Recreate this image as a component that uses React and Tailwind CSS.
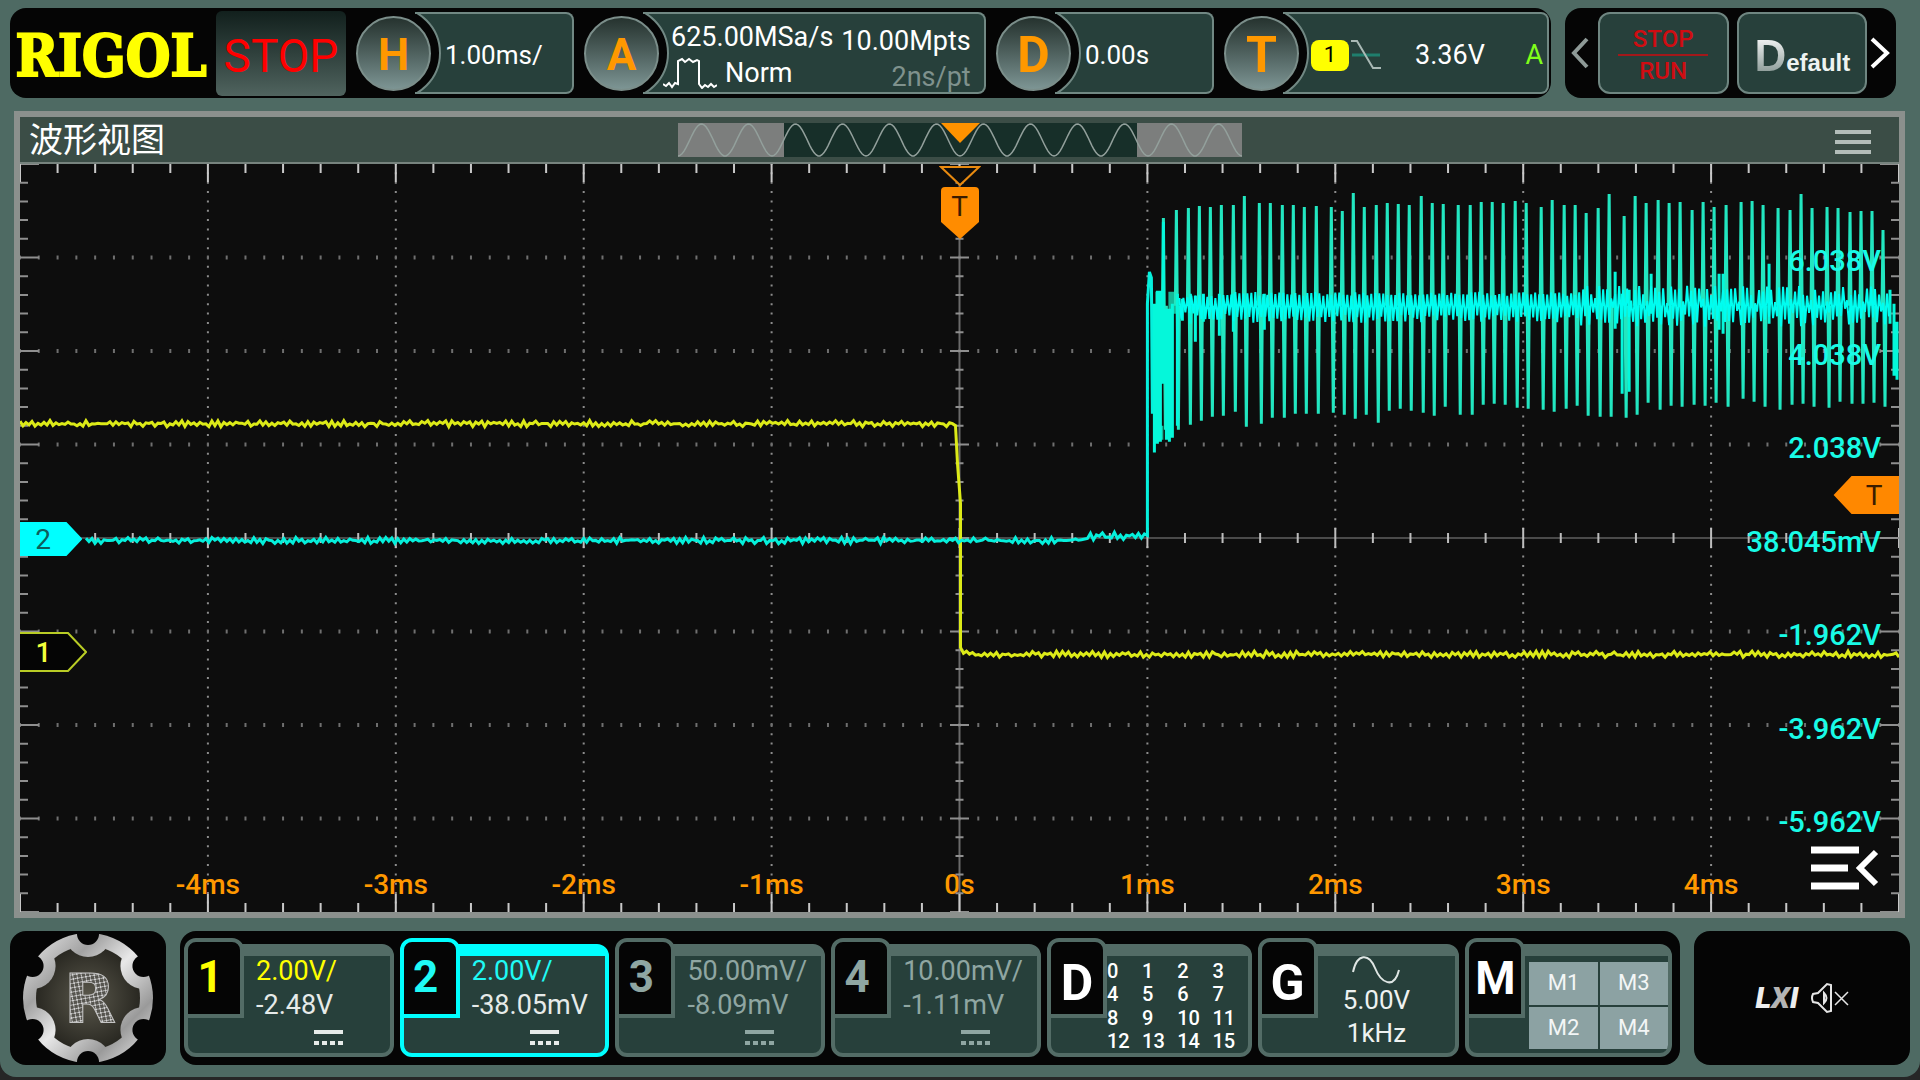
import React from 'react';

/* ---------- waveform data (plot space: 1880 x 749) ---------- */

const PLOT_W = 1880;
const PLOT_H = 749;
const DIV_X = 188;
const DIV_Y = PLOT_H / 8;

const noise = (i, seed) => {
  const s = Math.sin(i * 12.9898 + seed * 78.233) * 43758.5453;
  return (s - Math.floor(s)) * 2 - 1;
};

const noisy = (x0, x1, y, seed, amp = 3) => {
  const pts = [];
  for (let x = x0, i = 0; x <= x1; x += 3, i += 1) {
    pts.push(`${x},${(y + (i % 2 ? 1 : -1) * amp * 0.45 + noise(i, seed) * amp * 0.6).toFixed(1)}`);
  }
  return pts.join(' ');
};

const CH1_TRACE = `${noisy(0, 935, 260, 1)} 936,262 938,300 941,340 941,484 944,490 ${noisy(947, 1880, 491, 2)}`;
const CH2_TRACE = `${noisy(66, 1062, 377, 3)} 1068,375 ${noisy(1071, 1127, 373, 4, 4)} 1128,372 1128,140 1130,108 1132,114 1133,250`;

/* [x, top, bottom] of every pulse */
const PULSES = [
  [1144, 54, 266], [1157, 46, 266], [1169, 44, 261], [1180, 42, 257], [1191, 43, 253], [1202, 41, 252],
  [1214, 41, 248], [1225, 32, 263], [1240, 39, 260], [1251, 39, 254], [1263, 41, 254], [1274, 41, 250],
  [1285, 43, 250], [1297, 42, 250], [1312, 43, 249], [1323, 47, 251], [1334, 29, 255], [1345, 43, 251],
  [1357, 41, 259], [1368, 39, 247], [1379, 40, 245], [1390, 41, 247], [1402, 32, 249], [1413, 39, 252],
  [1424, 40, 243], [1439, 41, 251], [1451, 41, 251], [1462, 38, 241], [1473, 38, 240], [1484, 39, 241],
  [1496, 37, 244], [1507, 39, 245], [1522, 43, 246], [1533, 36, 248], [1545, 41, 245], [1556, 41, 242],
  [1567, 49, 252], [1579, 44, 253], [1590, 30, 253], [1605, 52, 254], [1616, 32, 251], [1627, 39, 239],
  [1639, 36, 246], [1650, 39, 242], [1661, 38, 243], [1673, 46, 241], [1684, 38, 242], [1695, 43, 239],
  [1707, 41, 243], [1722, 38, 235], [1733, 37, 238], [1744, 41, 243], [1759, 44, 246], [1771, 46, 241],
  [1782, 30, 240], [1793, 44, 243], [1808, 43, 244], [1819, 44, 238], [1831, 48, 240], [1842, 47, 240],
  [1853, 47, 239], [1864, 66, 243],
];
const PULSE_PATH = PULSES.map(([x, t, b]) => `M${x - 1} 142L${x} ${t}L${x + 2} ${b}L${x + 3} 142`).join('');

const bandPoints = () => {
  const pts = [];
  for (let x = 1160, i = 0; x < 1872; x += 2, i += 1) {
    const late = x > 1560;
    const open = late ? (i % 9 < 2 ? 0.45 : 1) : x < 1210 ? 0.8 : 1;
    const up = (late ? 15 : 12) * open + noise(i, 5) * (late ? 5 : 2);
    const down = (late ? 16 : 13) * open + noise(i, 6) * (late ? 6 : 4);
    pts.push(`${x},${(i % 2 ? 142 + down : 142 - up).toFixed(1)}`);
  }
  return pts.join(' ');
};
const BAND = bandPoints();
const BURST =
  'M1135 140V289M1138 127V280M1141 127V278M1147 145V276M1150 145V278M1153 140V274M1144 58V220M1158 130V262' +
  'M1163 135V157M1171 130V160M1176 132V178M1184 130V158M1200 130V172M1214 130V168M1245 130V166' +
  'M1603 130V230M1610 126V228M1596 108V165M1632 110V150M1700 110V166M1704 110V170M1750 100V160M1871 126V160M1875 140V212M1878 158V216';
const BURST_DIM = 'M1138 128V150M1151 128V150M1155 128V150M1142 262V276';

/* ---------- graticule ---------- */

const range = (n) => Array.from({ length: n }, (_, i) => i);

const TOP_TICKS = range(51).map((i) => {
  const x = (i * DIV_X) / 5;
  const l = i % 5 === 0 ? 18 : 9;
  return `M${x} 0v${l}M${x} ${PLOT_H}v${-l}`;
}).join('');
const MID_X_TICKS = range(51).map((i) => {
  const l = i % 5 === 0 ? 10 : 5;
  return `M${(i * DIV_X) / 5} ${PLOT_H / 2 - l}v${2 * l}`;
}).join('');
const SIDE_TICKS = range(41).map((i) => {
  const y = (i * DIV_Y) / 5;
  const l = i % 5 === 0 ? 19 : 8;
  return `M0 ${y}h${l}M${PLOT_W} ${y}h${-l}M${PLOT_W / 2 - l / 2} ${y}h${l}`;
}).join('');
const V_LINES = range(9).filter((i) => i !== 4).map((i) => `M${(i + 1) * DIV_X} 0V${PLOT_H}`).join('');
const H_LINES = range(7).filter((i) => i !== 3).map((i) => `M0 ${(i + 1) * DIV_Y}H${PLOT_W}`).join('');

function Graph() {
  return (
    <svg
      className="absolute inset-0 h-full w-full"
      viewBox={`0 0 ${PLOT_W} ${PLOT_H}`}
      preserveAspectRatio="none"
      aria-hidden="true"
      fill="none"
    >
      <path d={V_LINES} stroke="#8c8c8c" strokeWidth="2" strokeDasharray="2 7.36" strokeDashoffset="1" />
      <path d={H_LINES} stroke="#6f6f6f" strokeWidth="4" strokeDasharray="2 16.8" strokeDashoffset="1" />
      <path d={`M0 ${PLOT_H / 2}H${PLOT_W}`} stroke="#4a4a4a" strokeWidth="2" />
      <path d={`M${PLOT_W / 2} 0V${PLOT_H}`} stroke="#6a6a6a" strokeWidth="2" />
      <path d={MID_X_TICKS} stroke="#bdbdbd" strokeWidth="2" />
      <path d={SIDE_TICKS} stroke="#8f8f8f" strokeWidth="2" />
      <path d={TOP_TICKS} stroke="#c8c8c8" strokeWidth="2" />
      <polyline points={CH1_TRACE} stroke="#dcea18" strokeWidth="3" />
      <polyline points={CH2_TRACE} stroke="#05f0dc" strokeWidth="3" />
      <path d={BURST_DIM} stroke="#15b898" strokeWidth="4" />
      <path d={PULSE_PATH} stroke="#22e6c0" strokeWidth="3" />
      <path d={BURST} stroke="#05f7da" strokeWidth="3" />
      <polyline points={BAND} stroke="#00fdf0" strokeWidth="2" />
    </svg>
  );
}

/* ---------- header pieces ---------- */

function Knob({ letter, big, grow, children }) {
  return (
    <div className={`flex h-full min-w-0 items-center ${grow}`}>
      <button
        className={`relative z-10 flex size-[75px] shrink-0 items-center justify-center rounded-full border-2 border-[#7b8e8a] bg-linear-to-b from-[#26332f] to-[#7d9594] pt-1 font-bold text-[#ff9800] ${
          big ? 'text-[50px]' : 'text-[44px]'
        } leading-none`}
      >
        {letter}
      </button>
      <div className="relative -ml-4 flex h-[82px] min-w-0 flex-1 items-center overflow-hidden rounded-r-lg border-2 border-l-0 border-[#718883] bg-[#27403b] pt-1 pl-[30px]">
        <span className="absolute top-1/2 -left-[68px] size-[94px] -translate-y-1/2 rounded-full border-2 border-[#718883] bg-[#050505]" />
        {children}
      </div>
    </div>
  );
}

function TopBar() {
  return (
    <header className="flex h-[90px] gap-3.5 pr-3.5">
      <div className="flex min-w-0 flex-1 items-center gap-2.5 rounded-2xl bg-[#050505] pr-0.5 pl-1.5">
        <div className="flex w-[190px] justify-center pt-1 font-['DejaVu_Serif_Condensed','DejaVu_Serif',serif] text-[57px] leading-none font-bold text-[#ffff00] [-webkit-text-stroke:2px_#ffff00]">
          RIGOL
        </div>
        <button className="h-[85px] w-[130px] rounded-md bg-linear-to-b from-[#12201d] to-[#50645f] pt-1.5 text-[46px] leading-none text-[#ff0000]">
          STOP
        </button>
        <Knob letter="H" grow="flex-[218]">
          <span className="relative text-[26px] leading-none">1.00ms/</span>
        </Knob>
        <Knob letter="A" grow="flex-[402]">
          <div className="relative flex flex-1 items-start justify-between gap-2 pt-2 pr-4 leading-none">
            <div className="-ml-2.5 text-[27px] leading-[36px]">
              <div className="-mt-1 pl-2">625.00MSa/s</div>
              <div className="flex items-center gap-2">
                <svg width="54" height="32" viewBox="0 0 54 32" fill="none" stroke="#fff" strokeWidth="2">
                  <path d="M0 27l3 2 3-3 3 4 3-4 3 1V4l4-2 3 3 4-3 4 3 4-2 2 1v23l3 4 3-3 3 2 3-3 3 3 3-2" />
                </svg>
                Norm
              </div>
            </div>
            <div className="text-right text-[27px] leading-[36px]">
              <div>10.00Mpts</div>
              <div className="text-[#7f928d]">2ns/pt</div>
            </div>
          </div>
        </Knob>
        <Knob letter="D" big grow="flex-[218]">
          <span className="relative text-[26px] leading-none">0.00s</span>
        </Knob>
        <Knob letter="T" big grow="flex-[325]">
          <div className="relative flex flex-1 items-center pr-1 text-[27px] leading-none">
            <span className="-ml-0.5 flex h-[31px] w-[38px] items-center justify-center rounded-lg bg-[#ffff00] text-[22px] text-black">1</span>
            <svg className="ml-0.5" width="30" height="32" viewBox="0 0 30 32" fill="none" strokeWidth="2">
              <path d="M1 16H29" stroke="#1f7e6d" strokeWidth="3" />
              <path d="M0 2H6L22 29H30" stroke="#a9b9b5" />
            </svg>
            <span className="ml-[34px]">3.36V</span>
            <span className="ml-auto text-[#80ff1a]">A</span>
          </div>
        </Knob>
      </div>
      <div className="flex w-[331px] shrink-0 items-center justify-between rounded-2xl bg-[#050505] px-1.5">
        <button aria-label="Previous">
          <svg width="18" height="32" viewBox="0 0 18 32" fill="none" stroke="#8e9a97" strokeWidth="4">
            <path d="M16 2L3 16L16 30" />
          </svg>
        </button>
        <button className="flex h-[82px] w-[131px] flex-col items-center justify-center rounded-xl border-2 border-[#6f8681] bg-[#27403b] pt-1 text-2xl leading-none font-medium text-[#cf0d12]">
          <span>STOP</span>
          <span className="my-[3px] h-0.5 w-[90px] bg-[#a3181a]" />
          <span>RUN</span>
        </button>
        <button className="-mr-1.5 flex h-[82px] w-[130px] items-baseline justify-center rounded-xl border-2 border-[#6f8681] bg-[#27403b] pt-5 font-['Liberation_Sans',Arial,sans-serif] font-bold">
          <span className="bg-linear-to-b from-white to-[#7f8f8c] bg-clip-text text-[44px] leading-none text-transparent">D</span>
          <span className="text-2xl leading-none text-[#eef3f1]">efault</span>
        </button>
        <button aria-label="Next">
          <svg width="20" height="32" viewBox="0 0 20 32" fill="none" stroke="#fff" strokeWidth="4">
            <path d="M2 2L17 16L2 30" />
          </svg>
        </button>
      </div>
    </header>
  );
}

/* ---------- waveform view ---------- */

const OVERVIEW = range(283).map((i) => `${i * 2},${(17 + 16 * Math.cos((i * 2 * 2 * Math.PI) / 47)).toFixed(1)}`).join(' ');

function Overview() {
  return (
    <svg width="564" height="34" viewBox="0 0 564 34" fill="none" aria-hidden="true">
      <rect width="564" height="34" fill="#7c7e7d" />
      <rect x="106" width="353" height="34" fill="#172f29" />
      <polyline points={OVERVIEW} stroke="#93a09c" strokeWidth="1.5" />
      <path d="M263 0H302L282 20Z" fill="#ff9200" />
    </svg>
  );
}

const VOLTS = [
  ['6.038V', 'top-[13%]'],
  ['4.038V', 'top-[25.5%]'],
  ['2.038V', 'top-[38%]'],
  ['38.045mV', 'top-[50.5%]'],
  ['-1.962V', 'top-[63%]'],
  ['-3.962V', 'top-[75.5%]'],
  ['-5.962V', 'top-[88%]'],
];

const TIMES = [
  ['-4ms', 'left-[10%]'],
  ['-3ms', 'left-[20%]'],
  ['-2ms', 'left-[30%]'],
  ['-1ms', 'left-[40%]'],
  ['0s', 'left-[50%]'],
  ['1ms', 'left-[60%]'],
  ['2ms', 'left-[70%]'],
  ['3ms', 'left-[80%]'],
  ['4ms', 'left-[90%]'],
];

function Marker({ className, width, height, shape, fill, stroke, children }) {
  return (
    <div className={`absolute flex items-center justify-center pt-0.5 ${className}`}>
      <svg className="absolute inset-0" width={width} height={height} aria-hidden="true">
        <path d={shape} fill={fill} stroke={stroke} strokeWidth="2" />
      </svg>
      <span className="relative text-[28px] leading-none">{children}</span>
    </div>
  );
}

function WaveView() {
  return (
    <main className="mx-1 mr-[5px] flex flex-1 flex-col border-[6px] border-[#8b908d] bg-[#0d0d0d]">
      <div className="grid h-[47px] grid-cols-[1fr_auto_1fr] items-center border-b-2 border-[#77837e] bg-[#3b4d46]">
        <h1 className="pl-[9px] text-[34px] leading-none">波形视图</h1>
        <Overview />
        <button className="mr-7 flex w-9 flex-col gap-[6px] justify-self-end pt-1" aria-label="View menu">
          <span className="h-1 bg-[#b3bdb9]" />
          <span className="h-1 bg-[#b3bdb9]" />
          <span className="h-1 bg-[#b3bdb9]" />
        </button>
      </div>
      <section className="relative min-h-[480px] flex-1">
        {TIMES.map(([t, pos]) => (
          <span key={t} className={`absolute bottom-[13px] -translate-x-1/2 text-[28px] leading-none font-medium text-[#ff9800] ${pos}`}>
            {t}
          </span>
        ))}
        <Graph />
        {VOLTS.map(([v, pos]) => (
          <span key={v} className={`absolute right-[18px] -translate-y-1/2 text-[29px] leading-none font-medium text-[#19fbe6] ${pos}`}>
            {v}
          </span>
        ))}
        <svg className="absolute top-0 left-1/2 -translate-x-1/2" width="42" height="76" viewBox="0 0 42 76" fill="none" aria-hidden="true">
          <path d="M2 3H40L21 21Z" fill="#0d0d0d" stroke="#e88a10" strokeWidth="2" />
          <path d="M2 27Q2 23 6 23H36Q40 23 40 27V58L21 75L2 58Z" fill="#ff8c00" />
        </svg>
        <span className="absolute top-[29px] left-1/2 -translate-x-1/2 text-[28px] leading-none text-[#3a1c00]">T</span>
        <Marker className="top-[50.1%] left-0 h-[34px] w-[62px] -translate-y-1/2 pr-4 text-[#0d5f5c]" width="62" height="34" shape="M0 1H46L61 17L46 33H0Z" fill="#00ffff" stroke="#00ffff">
          2
        </Marker>
        <Marker className="top-[65.3%] left-0 h-[40px] w-[67px] -translate-y-1/2 pr-5 font-medium text-[#f2ff3a]" width="67" height="40" shape="M-2 1H48L66 20L48 39H-2Z" fill="#050505" stroke="#b9cc25">
          1
        </Marker>
        <Marker className="top-[44.3%] right-0 h-[38px] w-[66px] -translate-y-1/2 pl-4 text-[#3a1c00]" width="66" height="38" shape="M66 1H19L2 19L19 37H66Z" fill="#ff8800" stroke="#ff8800">
          T
        </Marker>
        <button className="absolute right-5 bottom-[22px]" aria-label="Expand side menu">
          <svg width="68" height="44" viewBox="0 0 68 44" fill="none" stroke="#fff" strokeWidth="7">
            <path d="M0 4H48M0 22H37M0 40H48" />
            <path d="M65 6L49 22L65 38" strokeWidth="6" />
          </svg>
        </button>
      </section>
    </main>
  );
}

/* ---------- bottom bar ---------- */

const NOTCHES = [30, 90, 150, 210, 270, 330].map((d) => [
  66 + 64 * Math.cos((d * Math.PI) / 180),
  66 + 64 * Math.sin((d * Math.PI) / 180),
]);

function GearLogo() {
  return (
    <svg width="132" height="132" viewBox="0 0 132 132" aria-hidden="true">
      <defs>
        <linearGradient id="steel" x1="0" y1="0" x2="1" y2="1">
          <stop offset="0" stopColor="#f2f2f2" />
          <stop offset="0.3" stopColor="#a2a2a2" />
          <stop offset="0.5" stopColor="#e8e8e8" />
          <stop offset="0.75" stopColor="#9a9a9a" />
          <stop offset="1" stopColor="#f4f4f4" />
        </linearGradient>
        <radialGradient id="core">
          <stop offset="0" stopColor="#5a584c" />
          <stop offset="1" stopColor="#1c1b16" />
        </radialGradient>
        <pattern id="mesh" width="6" height="6" patternUnits="userSpaceOnUse" patternTransform="rotate(35)">
          <rect width="6" height="6" fill="#55544e" />
          <path d="M0 0L6 6M6 0L0 6" stroke="#d2d2d2" strokeWidth="1" />
        </pattern>
        <mask id="gear">
          <circle cx="66" cy="66" r="65" fill="#fff" />
          {NOTCHES.map(([x, y]) => (
            <circle key={`${x}${y}`} cx={x} cy={y} r="11" fill="#000" />
          ))}
        </mask>
        <mask id="inner">
          <circle cx="66" cy="66" r="52" fill="#fff" />
          {NOTCHES.map(([x, y]) => (
            <circle key={`${x}${y}`} cx={x} cy={y} r="23" fill="#000" />
          ))}
        </mask>
      </defs>
      <rect width="132" height="132" fill="url(#steel)" mask="url(#gear)" />
      <rect width="132" height="132" fill="url(#core)" mask="url(#inner)" />
      <text x="68" y="91" textAnchor="middle" fontFamily="DejaVu Sans, sans-serif" fontWeight="700" fontSize="68" fill="url(#mesh)" stroke="#c4c4c4" strokeWidth="1">
        R
      </text>
    </svg>
  );
}

function Card({ label, tabText, accent, grow, as: Tag = 'button', children }) {
  const edge = accent ? 'border-[#00ffff]' : 'border-[#536c66]';
  return (
    <Tag className={`relative flex h-[119px] min-w-0 pt-1.5 text-left ${grow}`}>
      <span className={`flex min-w-0 flex-1 overflow-hidden rounded-xl border-4 border-t-[12px] bg-[#27403b] ${edge}`}>{children}</span>
      <span
        className={`absolute top-0 left-0 flex h-20 w-[60px] justify-center rounded-t-xl border-4 bg-[#050505] leading-none font-bold ${edge} ${tabText}`}
      >
        {label}
      </span>
    </Tag>
  );
}

function Channel({ label, scale, offset, accent, tabColor, scaleColor, offColor }) {
  return (
    <Card label={label} accent={accent} grow="flex-[210]" tabText={`text-[44px] pt-[13px] pr-2 ${tabColor}`}>
      <span className={`flex flex-1 flex-col pl-[68px] text-[27px] leading-[34px] ${offColor}`}>
        <span className={`-mt-0.5 whitespace-nowrap ${scaleColor}`}>{scale}</span>
        <span className="whitespace-nowrap">{offset}</span>
        <svg className="mt-2 ml-[58px]" width="29" height="15" viewBox="0 0 29 15" fill="none" stroke="currentColor" aria-hidden="true">
          <path d="M0 2H29" strokeWidth="4" />
          <path d="M0 13H29" strokeWidth="4" strokeDasharray="5 3" />
        </svg>
      </span>
    </Card>
  );
}

function BottomBar() {
  const dim = 'text-[#8fa6a2]';
  return (
    <footer className="flex h-[134px] gap-3.5">
      <button className="flex w-[156px] shrink-0 items-center justify-center rounded-2xl bg-[#050505]" aria-label="Home">
        <GearLogo />
      </button>
      <div className="flex min-w-0 flex-1 gap-1.5 rounded-2xl bg-[#050505] pt-[7px] pr-2 pl-1">
        <Channel label="1" scale="2.00V/" offset="-2.48V" tabColor="text-[#ffff00]" scaleColor="text-[#ffff00]" offColor="text-[#e6ebe9]" />
        <Channel label="2" scale="2.00V/" offset="-38.05mV" accent tabColor="text-[#1ffaf5]" scaleColor="text-[#1ffaf5]" offColor="text-[#e6ebe9]" />
        <Channel label="3" scale="50.00mV/" offset="-8.09mV" tabColor={dim} scaleColor={dim} offColor={dim} />
        <Channel label="4" scale="10.00mV/" offset="-1.11mV" tabColor={dim} scaleColor={dim} offColor={dim} />
        <Card label="D" grow="flex-[205]" tabText="pt-4 text-[50px] text-white">
          <span className="grid flex-1 grid-cols-4 pt-1 pl-14 text-xl leading-[23px] font-medium">
            {range(16).map((n) => (
              <span key={n}>{n}</span>
            ))}
          </span>
        </Card>
        <Card label="G" grow="flex-[202]" tabText="pt-4 text-[50px] text-white">
          <span className="flex flex-1 flex-col items-center pl-9 text-[26px] leading-[33px] text-[#eef2f1]">
            <svg width="48" height="28" viewBox="0 0 48 28" fill="none" stroke="#dfe6e4" strokeWidth="2" aria-hidden="true">
              <path d="M1 16C5 -3 17 -3 23 12S42 34 47 14" />
            </svg>
            <span>5.00V</span>
            <span>1kHz</span>
          </span>
        </Card>
        <Card label="M" as="div" grow="flex-[207]" tabText="pt-[13px] text-[46px] text-white">
          <span className="ml-[60px] grid flex-1 grid-flow-col grid-cols-2 grid-rows-2 gap-0.5 pt-1.5 pb-1 text-[22px] leading-none text-[#f3f6f6]">
            {['M1', 'M2', 'M3', 'M4'].map((m) => (
              <button key={m} className="bg-[#8ca2a3]">
                {m}
              </button>
            ))}
          </span>
        </Card>
      </div>
      <div className="flex w-[216px] shrink-0 items-center justify-center gap-3 rounded-2xl bg-[#050505]">
        <span className="text-[30px] leading-none font-black text-[#eee] italic">
          L<span className="text-[#b4b4b4]">X</span>I
        </span>
        <button aria-label="Muted">
          <svg width="38" height="32" viewBox="0 0 38 32" fill="none" stroke="#e6e6e6" strokeWidth="2">
            <path d="M2 12Q0 16 2 20L7 21L16 30L20 29V3L16 2L7 11Z" />
            <path d="M13 11Q18 16 13 21Z" />
            <path d="M24 10L37 23M37 10L24 23" strokeWidth="1.5" />
          </svg>
        </button>
      </div>
    </footer>
  );
}

export default function App() {
  return (
    <div className="flex min-h-screen flex-col bg-[#262626] font-['Roboto','Noto_Sans_CJK_SC',sans-serif] text-white">
      <div className="mb-[3px] flex flex-1 flex-col gap-[13px] rounded-b-2xl bg-[#4e6a63] pt-2 pr-2.5 pb-3 pl-2.5">
        <TopBar />
        <WaveView />
        <BottomBar />
      </div>
    </div>
  );
}
